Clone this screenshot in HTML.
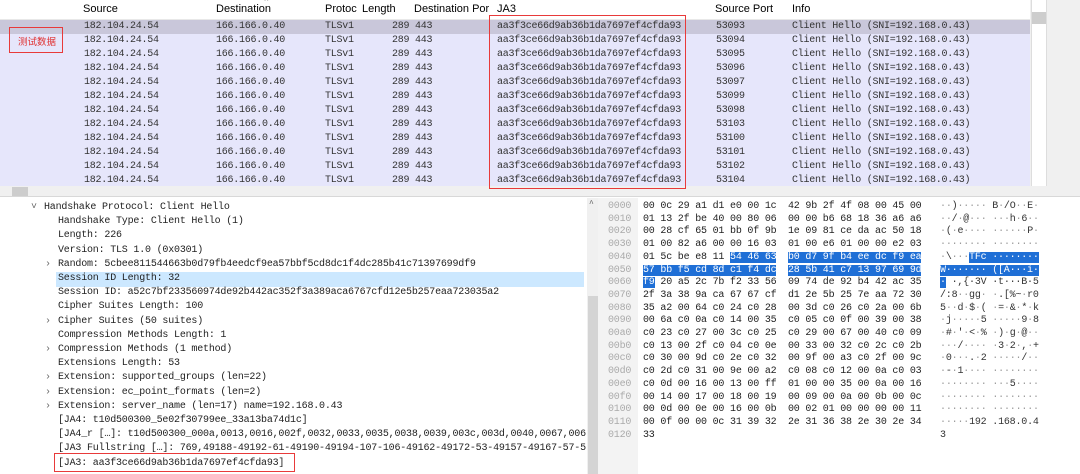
<!DOCTYPE html>
<html><head><meta charset="utf-8"><style>
*{margin:0;padding:0;box-sizing:border-box}
body{width:1080px;height:474px;overflow:hidden;background:#fff;position:relative;font-family:"Liberation Mono",monospace}
.a{position:absolute;white-space:pre}
.hd{font-family:"Liberation Sans",sans-serif;font-size:11px;color:#000;top:3px}
.row{position:absolute;left:0;width:1030px;height:14px;background:#e6e6fb}
.t{position:absolute;white-space:pre;font-size:10px;letter-spacing:-0.25px;color:#333;line-height:14px}
.d{position:absolute;white-space:pre;font-size:10px;letter-spacing:-0.2px;color:#222;line-height:14px}
.h{position:absolute;white-space:pre;font-size:10px;letter-spacing:-0.2px;color:#222;line-height:12.7px}
.s{background:#1f6fd6;color:#fff}
.g{color:#999}
</style></head><body>
<div class="a" style="left:0;top:0;width:1030px;height:20px;background:#fff;border-bottom:1px solid #e8e8e8"></div>
<div class="a hd" style="left:83px">Source</div>
<div class="a hd" style="left:216px">Destination</div>
<div class="a hd" style="left:325px">Protoc</div>
<div class="a hd" style="left:362px">Length</div>
<div class="a hd" style="left:414px">Destination Por</div>
<div class="a hd" style="left:497px">JA3</div>
<div class="a hd" style="left:715px">Source Port</div>
<div class="a hd" style="left:792px">Info</div>
<div class="a" style="left:264px;top:-3px;font-size:8px;color:#999">^</div>
<div id="rows"></div>
<script>
var ports=["53093","53094","53095","53096","53097","53099","53098","53103","53100","53101","53102","53104"];
var h="";
for(var i=0;i<12;i++){var y=20+i*14;
h+='<div class="row" style="top:'+y+'px;'+(i==0?'background:#c9c7da':'')+'"></div>';
h+='<div class="t" style="top:'+y+'px;left:84px">182.104.24.54</div>';
h+='<div class="t" style="top:'+y+'px;left:216px">166.166.0.40</div>';
h+='<div class="t" style="top:'+y+'px;left:325px">TLSv1</div>';
h+='<div class="t" style="top:'+y+'px;left:392px">289 443</div>';
h+='<div class="t" style="top:'+y+'px;left:497px">aa3f3ce66d9ab36b1da7697ef4cfda93</div>';
h+='<div class="t" style="top:'+y+'px;left:716px">'+ports[i]+'</div>';
h+='<div class="t" style="top:'+y+'px;left:792px">Client Hello (SNI=192.168.0.43)</div>';}
document.getElementById("rows").innerHTML=h;
</script>
<div class="a" style="left:1030px;top:0;width:50px;height:186px;background:#f0f0f0"></div>
<div class="a" style="left:1031px;top:0;width:16px;height:186px;background:#fff;border-left:1px solid #ddd;border-right:1px solid #ddd"></div>
<div class="a" style="left:1032px;top:12px;width:14px;height:12px;background:#cdcdcd"></div>
<div class="a" style="left:0;top:186px;width:1080px;height:11px;background:#f0f0f0;border-bottom:1px solid #d8d8d8"></div>
<div class="a" style="left:12px;top:187px;width:16px;height:9px;background:#cdcdcd"></div>
<div class="a" style="left:489px;top:15px;width:197px;height:174px;border:1.5px solid #e83a3a"></div>
<div class="a" style="left:9px;top:27px;width:54px;height:26px;border:1.5px solid #e83a3a"></div>
<div class="a" style="left:18px;top:34px;font-family:'Liberation Sans','Noto Sans CJK SC',sans-serif;font-size:9.5px;color:#e03030">测试数据</div>
<div class="a" style="left:56px;top:272px;width:528px;height:15px;background:#cce8ff"></div>
<div id="det"></div>
<script>
var L=[[44,"Handshake Protocol: Client Hello","v"],[58,"Handshake Type: Client Hello (1)"],[58,"Length: 226"],[58,"Version: TLS 1.0 (0x0301)"],[58,"Random: 5cbee811544663b0d79fb4eedcf9ea57bbf5cd8dc1f4dc285b41c71397699df9",">"],[58,"Session ID Length: 32"],[58,"Session ID: a52c7bf233560974de92b442ac352f3a389aca6767cfd12e5b257eaa723035a2"],[58,"Cipher Suites Length: 100"],[58,"Cipher Suites (50 suites)",">"],[58,"Compression Methods Length: 1"],[58,"Compression Methods (1 method)",">"],[58,"Extensions Length: 53"],[58,"Extension: supported_groups (len=22)",">"],[58,"Extension: ec_point_formats (len=2)",">"],[58,"Extension: server_name (len=17) name=192.168.0.43",">"],[58,"[JA4: t10d500300_5e02f30799ee_33a13ba74d1c]"],[58,"[JA4_r [\u2026]: t10d500300_000a,0013,0016,002f,0032,0033,0035,0038,0039,003c,003d,0040,0067,006"],[58,"[JA3 Fullstring [\u2026]: 769,49188-49192-61-49190-49194-107-106-49162-49172-53-49157-49167-57-5"],[58,"[JA3: aa3f3ce66d9ab36b1da7697ef4cfda93]"]];
var h="";
for(var i=0;i<L.length;i++){var y=201+i*14.2;
h+='<div class="d" style="top:'+y+'px;left:'+L[i][0]+'px;max-width:'+(586-L[i][0])+'px;overflow:hidden">'+L[i][1]+'</div>';
if(L[i][2])h+='<div class="d" style="top:'+y+'px;left:'+(L[i][0]-13)+'px;color:#666">'+(L[i][2]=="v"?"\u02c5":"\u203a")+'</div>';}
document.getElementById("det").innerHTML=h;
</script>
<div class="a" style="left:54px;top:453px;width:241px;height:19px;border:1.5px solid #e83a3a"></div>
<div class="a" style="left:587px;top:198px;width:11px;height:276px;background:#f0f0f0"></div>
<div class="a" style="left:588px;top:296px;width:10px;height:178px;background:#d4d4d4"></div>
<div class="a" style="left:589px;top:200px;font-size:8px;color:#555">^</div>
<div class="a" style="left:598px;top:198px;width:40px;height:276px;background:#f3f3f3"></div>
<div id="hex"></div>
<script>
var R=[["00 0c 29 a1 d1 e0 00 1c","42 9b 2f 4f 08 00 45 00","\u00b7\u00b7)\u00b7\u00b7\u00b7\u00b7\u00b7 B\u00b7/O\u00b7\u00b7E\u00b7"],
["01 13 2f be 40 00 80 06","00 00 b6 68 18 36 a6 a6","\u00b7\u00b7/\u00b7@\u00b7\u00b7\u00b7 \u00b7\u00b7\u00b7h\u00b76\u00b7\u00b7"],
["00 28 cf 65 01 bb 0f 9b","1e 09 81 ce da ac 50 18","\u00b7(\u00b7e\u00b7\u00b7\u00b7\u00b7 \u00b7\u00b7\u00b7\u00b7\u00b7\u00b7P\u00b7"],
["01 00 82 a6 00 00 16 03","01 00 e6 01 00 00 e2 03","\u00b7\u00b7\u00b7\u00b7\u00b7\u00b7\u00b7\u00b7 \u00b7\u00b7\u00b7\u00b7\u00b7\u00b7\u00b7\u00b7"],
['01 5c be e8 11 <span class="s">54 46 63</span>','<span class="s">b0 d7 9f b4 ee dc f9 ea</span>','<span class="g">\u00b7</span>\\<span class="g">\u00b7\u00b7\u00b7</span><span class="s">TFc \u00b7\u00b7\u00b7\u00b7\u00b7\u00b7\u00b7\u00b7</span>'],
['<span class="s">57 bb f5 cd 8d c1 f4 dc</span>','<span class="s">28 5b 41 c7 13 97 69 9d</span>','<span class="s">W\u00b7\u00b7\u00b7\u00b7\u00b7\u00b7\u00b7 ([A\u00b7\u00b7\u00b7i\u00b7</span>'],
['<span class="s">f9</span> 20 a5 2c 7b f2 33 56','09 74 de 92 b4 42 ac 35','<span class="s">\u00b7</span> \u00b7,{\u00b73V \u00b7t\u00b7\u00b7\u00b7B\u00b75'],
["2f 3a 38 9a ca 67 67 cf","d1 2e 5b 25 7e aa 72 30","/:8\u00b7\u00b7gg\u00b7 \u00b7.[%~\u00b7r0"],
["35 a2 00 64 c0 24 c0 28","00 3d c0 26 c0 2a 00 6b","5\u00b7\u00b7d\u00b7$\u00b7( \u00b7=\u00b7&\u00b7*\u00b7k"],
["00 6a c0 0a c0 14 00 35","c0 05 c0 0f 00 39 00 38","\u00b7j\u00b7\u00b7\u00b7\u00b7\u00b75 \u00b7\u00b7\u00b7\u00b7\u00b79\u00b78"],
["c0 23 c0 27 00 3c c0 25","c0 29 00 67 00 40 c0 09","\u00b7#\u00b7'\u00b7<\u00b7% \u00b7)\u00b7g\u00b7@\u00b7\u00b7"],
["c0 13 00 2f c0 04 c0 0e","00 33 00 32 c0 2c c0 2b","\u00b7\u00b7\u00b7/\u00b7\u00b7\u00b7\u00b7 \u00b73\u00b72\u00b7,\u00b7+"],
["c0 30 00 9d c0 2e c0 32","00 9f 00 a3 c0 2f 00 9c","\u00b70\u00b7\u00b7\u00b7.\u00b72 \u00b7\u00b7\u00b7\u00b7\u00b7/\u00b7\u00b7"],
["c0 2d c0 31 00 9e 00 a2","c0 08 c0 12 00 0a c0 03","\u00b7-\u00b71\u00b7\u00b7\u00b7\u00b7 \u00b7\u00b7\u00b7\u00b7\u00b7\u00b7\u00b7\u00b7"],
["c0 0d 00 16 00 13 00 ff","01 00 00 35 00 0a 00 16","\u00b7\u00b7\u00b7\u00b7\u00b7\u00b7\u00b7\u00b7 \u00b7\u00b7\u00b75\u00b7\u00b7\u00b7\u00b7"],
["00 14 00 17 00 18 00 19","00 09 00 0a 00 0b 00 0c","\u00b7\u00b7\u00b7\u00b7\u00b7\u00b7\u00b7\u00b7 \u00b7\u00b7\u00b7\u00b7\u00b7\u00b7\u00b7\u00b7"],
["00 0d 00 0e 00 16 00 0b","00 02 01 00 00 00 00 11","\u00b7\u00b7\u00b7\u00b7\u00b7\u00b7\u00b7\u00b7 \u00b7\u00b7\u00b7\u00b7\u00b7\u00b7\u00b7\u00b7"],
["00 0f 00 00 0c 31 39 32","2e 31 36 38 2e 30 2e 34","\u00b7\u00b7\u00b7\u00b7\u00b7192 .168.0.4"],
["33","","3"]];
var h="";
for(var i=0;i<R.length;i++){var y=201+i*12.7;var off=("000"+(i*16).toString(16)).slice(-4);
var asc=(i>=4&&i<=6)?R[i][2]:R[i][2].replace(/\u00b7/g,'<span class="g">\u00b7</span>');
h+='<div class="h" style="top:'+y+'px;left:608px;color:#aaa">'+off+'</div>';
h+='<div class="h" style="top:'+y+'px;left:643px">'+R[i][0]+'</div>';
h+='<div class="h" style="top:'+y+'px;left:788px">'+R[i][1]+'</div>';
h+='<div class="h" style="top:'+y+'px;left:940px;color:#333">'+asc+'</div>';}
document.getElementById("hex").innerHTML=h;
</script>
</body></html>
